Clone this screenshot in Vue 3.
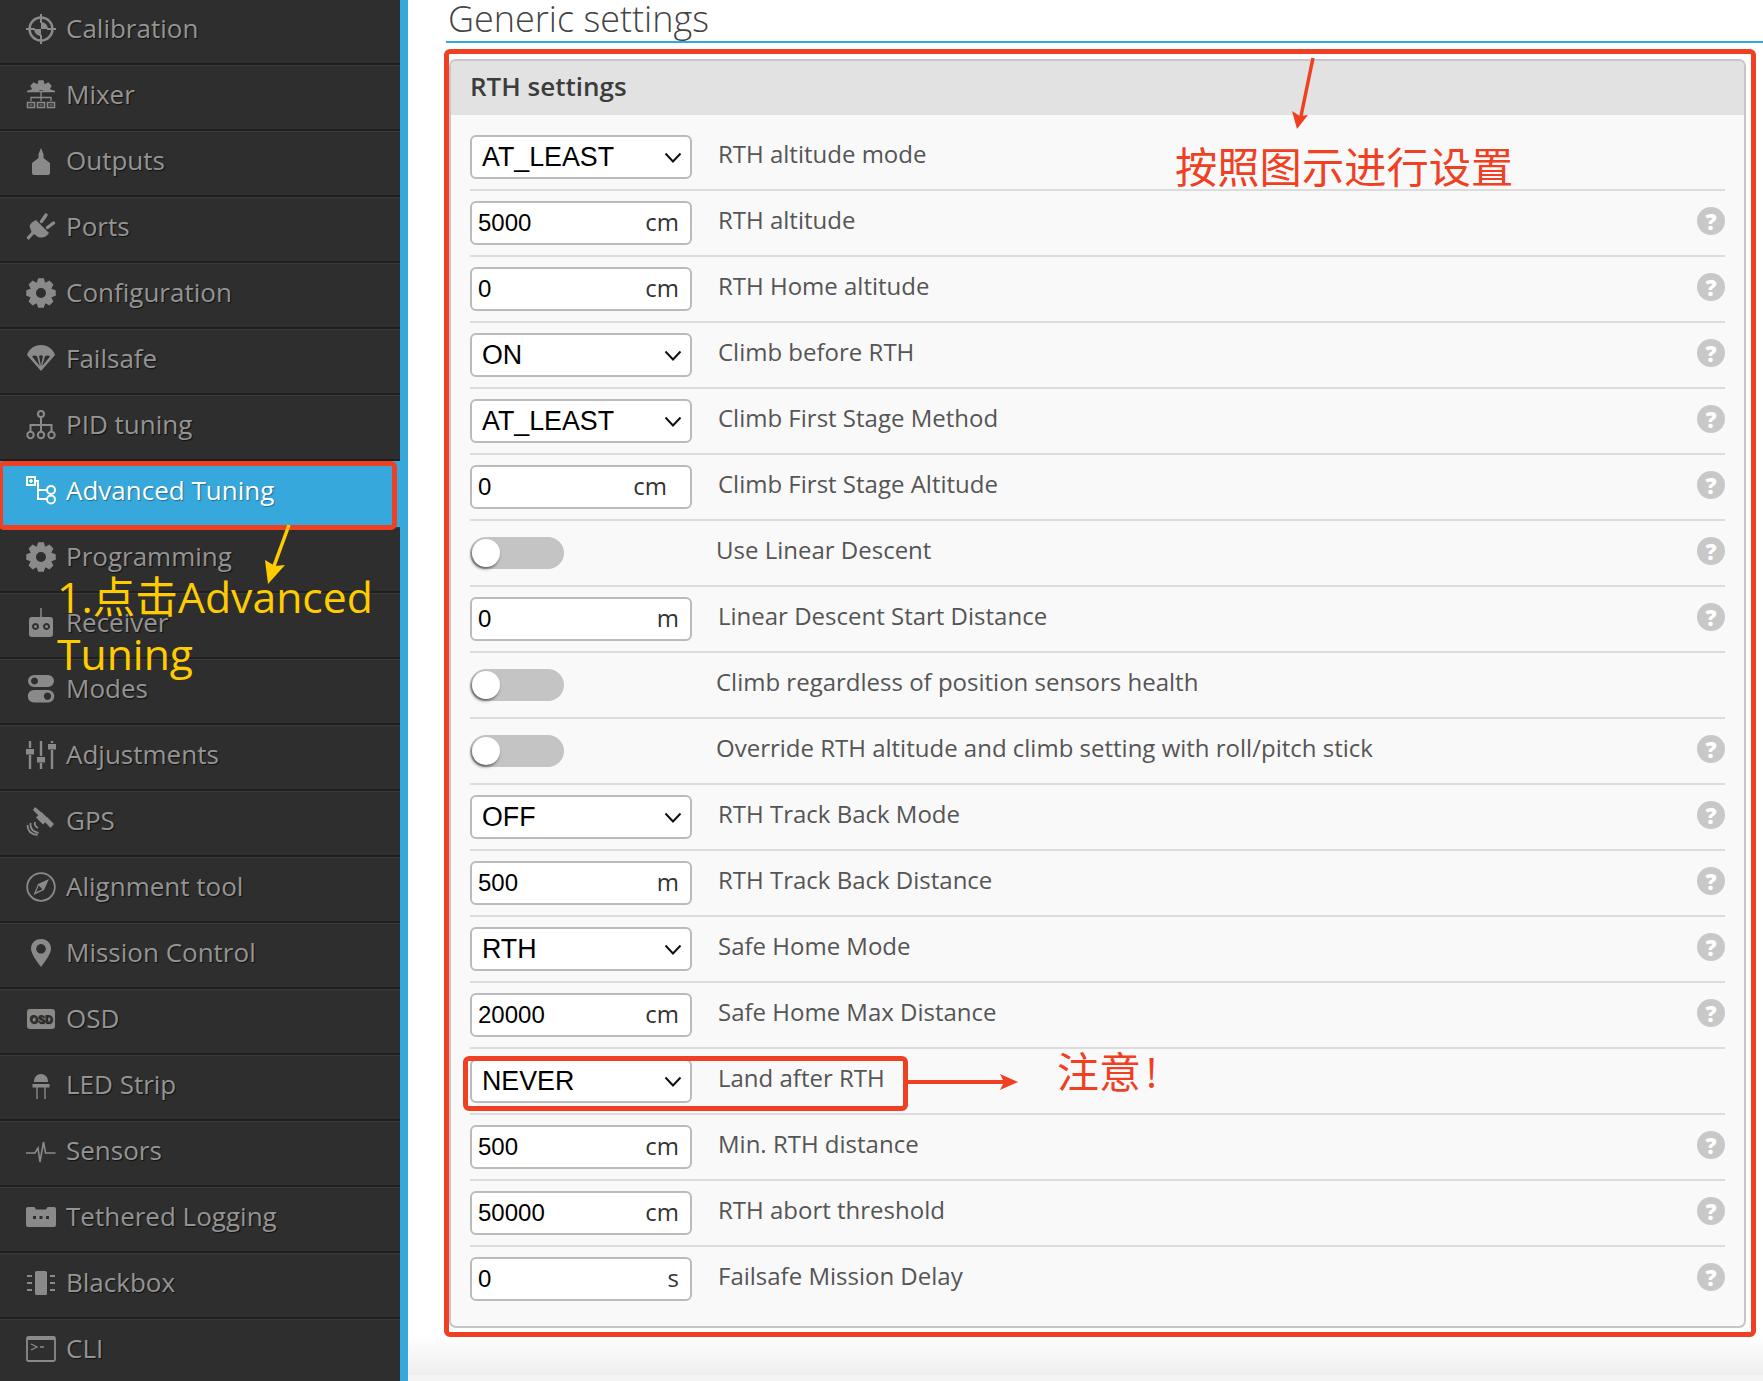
<script setup>
// builds a cog outline with a round hole in the middle
const gear = (cx, cy, R, r, hole, n) => {
  let d = ''
  const step = (Math.PI * 2) / n
  for (let i = 0; i < n; i++) {
    const a = i * step - Math.PI / 2
    const pts = [
      [r, a - step * 0.5],
      [R, a - step * 0.24],
      [R, a + step * 0.24],
      [r, a + step * 0.5]
    ]
    pts.forEach(([rad, t], j) => {
      const x = (cx + rad * Math.cos(t)).toFixed(2)
      const y = (cy + rad * Math.sin(t)).toFixed(2)
      d += (i === 0 && j === 0 ? 'M' : 'L') + x + ' ' + y + ' '
    })
  }
  d += `Z M${cx - hole} ${cy} a${hole} ${hole} 0 1 0 ${hole * 2} 0 a${hole} ${hole} 0 1 0 ${-hole * 2} 0 Z`
  return d
}

const cog = `<path fill="currentColor" fill-rule="evenodd" d="${gear(15, 15, 15, 11.2, 5, 8)}"/>`

const icons = {
  calibration: `<g fill="none" stroke="currentColor" stroke-width="2.4"><circle cx="15" cy="15" r="11.5"/><path stroke-width="2" d="M15 0v9M15 21v9M0 15h9M21 15h9"/></g><path fill="currentColor" d="M15 8a7 7 0 0 1 7 7h-7zM15 22a7 7 0 0 1-7-7h7z"/>`,
  mixer: `<clipPath id="mixclip"><rect x="0" y="0" width="30" height="11"/></clipPath><path clip-path="url(#mixclip)" fill="currentColor" fill-rule="evenodd" d="${gear(15, 13, 13, 9.6, 3, 8)}"/><path fill="none" stroke="currentColor" stroke-width="1.3" d="M15 11v6M5 21v-3.5h20V21M15 17.5V21M1 11.5h28"/><path fill="none" stroke="currentColor" stroke-width="1.5" d="M1.5 22.5h7v5h-7zM11.5 22.5h7v5h-7zM21.5 22.5h7v5h-7z"/><path fill="currentColor" d="M3.5 24.5h3v1h-3zM13.5 24.5h3v1h-3zM23.5 24.5h3v1h-3z"/>`,
  outputs: `<path fill="currentColor" d="M15 2l2.500 6v4L24 17v10q0 2-2 2H8q-2 0-2-2V17l6.500-5V8z"/>`,
  ports: `<path fill="currentColor" d="M10 8L23 21Q19 27 12 25L8 22 2.500 28 0.500 25.500 5.500 20 3.500 14Q5 10 10 8z"/><path fill="none" stroke="currentColor" stroke-width="3.400" stroke-linecap="round" d="M15.500 9.500L20 3M21.500 15.500L27.500 11"/>`,
  cog,
  failsafe: `<path fill="currentColor" fill-rule="evenodd" d="M15 1C7 1 2 7 1 11L15 27 29 11C28 7 23 1 15 1zM6 12.500q2.500-2 5-.2L13.800 22zM19 12.300q2.500-1.800 5 .2L16.200 22zM13 11.700q2-1 4 0L15 22z"/>`,
  pid: `<g fill="none" stroke="currentColor" stroke-width="2"><circle cx="15" cy="4" r="3"/><circle cx="4.500" cy="25" r="3.200"/><circle cx="15" cy="25" r="3.200"/><circle cx="25.500" cy="25" r="3.200"/><path d="M15 7v14.800M4.500 21.800V15h21v6.800"/></g>`,
  advanced: `<g fill="none" stroke="currentColor" stroke-width="2"><rect x="1" y="1" width="8" height="8"/><path d="M9 5h3v18h10M12 14h10M3.300 5h3.400M5 3.300v3.400"/><circle cx="25" cy="14" r="4"/><circle cx="25" cy="23.500" r="4"/></g>`,
  receiver: `<path fill="none" stroke="currentColor" stroke-width="1.500" d="M15 0v9"/><path fill="currentColor" fill-rule="evenodd" d="M6 9h18q3 0 3 3v14q0 3-3 3H6q-3 0-3-3V12q0-3 3-3zM9.500 15a3.500 3.500 0 1 0 .01 0zM20.500 15a3.500 3.500 0 1 0 .01 0z"/><circle cx="9.500" cy="18.500" r="1.500" fill="currentColor"/><circle cx="20.500" cy="18.500" r="1.500" fill="currentColor"/>`,
  modes: `<path fill="currentColor" fill-rule="evenodd" d="M8 1h14a6 6 0 0 1 0 12H8A6 6 0 0 1 8 1zM8.500 3.500a3.500 3.500 0 1 0 .01 0zM8 16h14a6 6 0 0 1 0 12.500H8A6 6 0 0 1 8 16zM21.500 18.500a3.700 3.700 0 1 0 .01 0z"/>`,
  adjust: `<g fill="none" stroke="currentColor" stroke-width="2.400"><path d="M4 1v7M4 15v14M15 1v15M15 23v6M26 1v2M26 10v19"/></g><path fill="currentColor" d="M0 9h8v5.500H0zM11 17h8v5.500h-8zM22 4h8v5.500h-8z"/>`,
  gps: `<g fill="currentColor"><path d="M9 1l7 6-3 3-6-6zM21 11l7 7-3.500 4-7-7.500z"/><path d="M15.500 6l7 7-5.500 5.500-7-7z"/></g><path fill="none" stroke="currentColor" stroke-width="1.800" d="M9 16q-1 4 3 6M4.500 17q-1 8 8 10M1.500 19q0 9 10 10"/>`,
  align: `<circle cx="15" cy="15" r="13.800" fill="none" stroke="currentColor" stroke-width="1.800"/><path fill="currentColor" d="M23 7L18 18 7.500 23 12 12z"/><path fill="#2e2e2e" d="M12.800 13.500L16.500 17.300 10 20z"/>`,
  pin: `<path fill="currentColor" fill-rule="evenodd" d="M15 1C8.500 1 5 6 5 10.500c0 5 5 12 10 18.500 5-6.500 10-13.500 10-18.500C25 6 21.500 1 15 1zM15 6a4.800 4.800 0 1 1 -.01 0z"/>`,
  osd: `<rect x="1" y="5" width="28" height="20" rx="3" fill="currentColor"/><text x="15" y="19" text-anchor="middle" font-family="Liberation Sans" font-size="10.500" font-weight="700" fill="#2e2e2e">OSD</text>`,
  led: `<path fill="currentColor" d="M8 12V11a7 7 0 0 1 14 0v1zM6.500 14h17v3.500h-17z"/><path fill="none" stroke="currentColor" stroke-width="1.400" d="M11 17v12M19 17v12"/>`,
  sensors: `<path fill="none" stroke="currentColor" stroke-width="1.600" d="M0 17h9l3-5 2 14 3.500-20 2 11h10"/>`,
  tether: `<path fill="currentColor" fill-rule="evenodd" d="M2 5h6.500l1.500 2.500h10L21.500 5H28q2 0 2 2v16q0 2-2 2H2q-2 0-2-2V7q0-2 2-2zM7 14h3v3H7zM13.500 14h3v3h-3zM20 14h3v3h-3z"/>`,
  blackbox: `<rect x="9" y="3" width="12" height="24" rx="1.500" fill="currentColor"/><path fill="none" stroke="currentColor" stroke-width="2.200" d="M1 8h5M1 15h5M1 22h5M24 8h5M24 15h5M24 22h5"/>`,
  cli: `<rect x="1" y="3" width="28" height="24" rx="1.500" fill="none" stroke="currentColor" stroke-width="1.800"/><path fill="currentColor" d="M1 3h28v3H1z"/><path fill="none" stroke="currentColor" stroke-width="1.300" d="M5 10l6 3-6 3M14 13h4"/>`
}

const menu = [
  { name: 'Calibration', icon: 'calibration' },
  { name: 'Mixer', icon: 'mixer' },
  { name: 'Outputs', icon: 'outputs' },
  { name: 'Ports', icon: 'ports' },
  { name: 'Configuration', icon: 'cog' },
  { name: 'Failsafe', icon: 'failsafe' },
  { name: 'PID tuning', icon: 'pid' },
  { name: 'Advanced Tuning', icon: 'advanced', active: true },
  { name: 'Programming', icon: 'cog' },
  { name: 'Receiver', icon: 'receiver' },
  { name: 'Modes', icon: 'modes' },
  { name: 'Adjustments', icon: 'adjust' },
  { name: 'GPS', icon: 'gps' },
  { name: 'Alignment tool', icon: 'align' },
  { name: 'Mission Control', icon: 'pin' },
  { name: 'OSD', icon: 'osd' },
  { name: 'LED Strip', icon: 'led' },
  { name: 'Sensors', icon: 'sensors' },
  { name: 'Tethered Logging', icon: 'tether' },
  { name: 'Blackbox', icon: 'blackbox' },
  { name: 'CLI', icon: 'cli' }
]

const rows = [
  { type: 'select', value: 'AT_LEAST', label: 'RTH altitude mode' },
  { type: 'input', value: '5000', unit: 'cm', label: 'RTH altitude', help: true },
  { type: 'input', value: '0', unit: 'cm', label: 'RTH Home altitude', help: true },
  { type: 'select', value: 'ON', label: 'Climb before RTH', help: true },
  { type: 'select', value: 'AT_LEAST', label: 'Climb First Stage Method', help: true },
  { type: 'input', value: '0', unit: 'cm', wide: true, label: 'Climb First Stage Altitude', help: true },
  { type: 'toggle', label: 'Use Linear Descent', help: true },
  { type: 'input', value: '0', unit: 'm', label: 'Linear Descent Start Distance', help: true },
  { type: 'toggle', label: 'Climb regardless of position sensors health' },
  { type: 'toggle', label: 'Override RTH altitude and climb setting with roll/pitch stick', help: true },
  { type: 'select', value: 'OFF', label: 'RTH Track Back Mode', help: true },
  { type: 'input', value: '500', unit: 'm', label: 'RTH Track Back Distance', help: true },
  { type: 'select', value: 'RTH', label: 'Safe Home Mode', help: true },
  { type: 'input', value: '20000', unit: 'cm', label: 'Safe Home Max Distance', help: true },
  { type: 'select', value: 'NEVER', label: 'Land after RTH' },
  { type: 'input', value: '500', unit: 'cm', label: 'Min. RTH distance', help: true },
  { type: 'input', value: '50000', unit: 'cm', label: 'RTH abort threshold', help: true },
  { type: 'input', value: '0', unit: 's', label: 'Failsafe Mission Delay', help: true }
]
</script>

<template>
  <div class="page">
    <nav class="sidebar">
      <ul class="menu">
        <li v-for="item in menu" :key="item.name" class="menu-item" :class="{ active: item.active }">
          <svg class="menu-icon" viewBox="0 0 30 30" v-html="icons[item.icon]"></svg>
          <span class="menu-text">{{ item.name }}</span>
        </li>
      </ul>
    </nav>

    <main class="main">
      <h2 class="title">Generic settings</h2>

      <section class="panel">
        <h3 class="panel-head">RTH settings</h3>
        <div class="panel-body">
          <div v-for="row in rows" :key="row.label" class="row" :class="{ 'is-toggle': row.type === 'toggle' }">
            <div v-if="row.type === 'select'" class="control select">
              <span>{{ row.value }}</span>
              <svg class="chevron" viewBox="0 0 18 11"><path d="M1.500 1.500L9 9.500l7.500-8" fill="none" stroke="#111" stroke-width="2"/></svg>
            </div>
            <div v-else-if="row.type === 'input'" class="control field" :class="{ wide: row.wide }">
              <span class="value">{{ row.value }}</span>
              <span class="unit">{{ row.unit }}</span>
            </div>
            <div v-else class="toggle"><i class="knob"></i></div>
            <span class="label">{{ row.label }}</span>
            <span v-if="row.help" class="help">?</span>
          </div>
        </div>
      </section>

      <div class="foot"></div>
    </main>

    <!-- hand-drawn notes on top of the screenshot -->
    <div class="mark mark-panel"></div>
    <div class="mark mark-menu"></div>
    <div class="mark mark-land"></div>

    <svg class="arrows" viewBox="0 0 1763 1381">
      <path d="M289 525L274 566" stroke="#ffcc00" stroke-width="3.500" fill="none"/>
      <path d="M268 584L265 560 275 566 285 565z" fill="#ffcc00"/>
      <path d="M1313 58L1301 116" stroke="#f04023" stroke-width="3.500" fill="none"/>
      <path d="M1297 129L1292 111 1300 116 1308 115z" fill="#f04023"/>
      <path d="M907 1082H1006" stroke="#f04023" stroke-width="4" fill="none"/>
      <path d="M1018 1082L1000 1074 1004 1082 1000 1090z" fill="#f04023"/>
    </svg>

    <div class="note note-yellow">1.点击Advanced<br>Tuning</div>
    <div class="note note-red">按照图示进行设置</div>
    <div class="note note-warn">注意<span class="bang">!</span></div>
  </div>
</template>

<style scoped>
.page {
  position: relative;
  display: flex;
  width: 1763px;
  height: 1381px;
  overflow: hidden;
  background: #fff;
  font-family: "Open Sans", "Noto Sans CJK SC", sans-serif;
}

.sidebar {
  flex: none;
  width: 400px;
  border-right: 8px solid #37a8db;
  background: #2e2e2e;
  overflow: hidden;
}

.menu {
  list-style: none;
  margin: -1px 0 0;
  padding: 0;
}

.menu-item {
  box-sizing: border-box;
  display: flex;
  align-items: center;
  gap: 10px;
  height: 66px;
  padding: 0 0 6px 26px;
  border-top: 1px solid #3a3a3a;
  border-bottom: 2px solid #1f1f1f;
  color: #949494;
  font-size: 26px;
  text-shadow: 1px 1px 1px #111;
}

.menu-text {
  margin-bottom: 2px;
}

.menu-item.active {
  background: #37a8db;
  color: #fff;
  border-color: #37a8db;
  text-shadow: 1px 1px 1px #1d6f96;
}

.menu-icon {
  flex: none;
  width: 30px;
  height: 30px;
  color: #8a8a8a;
}

.active .menu-icon {
  color: #fff;
}

.main {
  flex: 1;
  display: flex;
  flex-direction: column;
  min-width: 0;
  padding-left: 41px;
}

.title {
  box-sizing: border-box;
  height: 43px;
  margin: 0 0 0 -3px;
  padding-left: 2px;
  border-bottom: 2px solid #37a8db;
  color: #444;
  font-size: 36px;
  font-weight: 300;
  line-height: 38px;
  white-space: nowrap;
}

.panel {
  box-sizing: border-box;
  margin: 16px 17px 0 0;
  border: 2px solid #c6c6c6;
  border-radius: 7px;
  background: #f9f9f9;
  overflow: hidden;
}

.panel-head {
  height: 54px;
  margin: 0;
  padding-left: 19px;
  background: #e2e2e2;
  color: #3c3c3c;
  font-size: 26px;
  font-weight: 600;
  line-height: 50px;
}

.panel-body {
  padding: 10px 19px 15px;
}

.row {
  box-sizing: border-box;
  display: flex;
  align-items: center;
  height: 66px;
  border-bottom: 2px solid #dcdcdc;
}

.row:last-child {
  height: 64px;
  border-bottom: 0;
}

.control {
  box-sizing: border-box;
  flex: none;
  display: flex;
  align-items: center;
  justify-content: space-between;
  width: 222px;
  height: 44px;
  border: 2px solid #bbb;
  border-radius: 6px;
  background: #fff;
  color: #000;
  font-family: "Liberation Sans", Arial, sans-serif;
}

.select {
  padding: 0 8px 0 10px;
  font-size: 26.800px;
}

.chevron {
  width: 18px;
  height: 11px;
}

.field {
  padding: 0 11px 0 6px;
  font-size: 24px;
}

.field.wide {
  padding-right: 23px;
}

.unit {
  margin-bottom: 3px;
  color: #333;
  font-family: "Open Sans", sans-serif;
  font-weight: 500;
}

.toggle {
  position: relative;
  flex: none;
  width: 94px;
  height: 32px;
  border-radius: 16px;
  background: #c4c4c4;
}

.knob {
  position: absolute;
  left: 2px;
  top: 2px;
  width: 28px;
  height: 28px;
  border-radius: 50%;
  background: #fff;
  box-shadow: -1px 2px 3px rgba(0, 0, 0, 0.5);
}

.label {
  flex: 1;
  margin: 0 0 8px 26px;
  color: #555;
  font-size: 24px;
  white-space: nowrap;
}

.is-toggle .label {
  margin-left: 152px;
}

.help {
  flex: none;
  width: 28px;
  height: 28px;
  margin-bottom: 4px;
  border-radius: 50%;
  background: #c8c8c8;
  color: #fff;
  font-size: 22px;
  font-weight: 800;
  line-height: 28px;
  text-align: center;
}

.foot {
  flex: none;
  margin: auto 0 0 -41px;
  height: 41px;
  border-bottom: 6px solid #f4f4f4;
  background: linear-gradient(#fff, #eee);
}

.mark {
  position: absolute;
  box-sizing: border-box;
  border: 5px solid #f04023;
  border-radius: 6px;
}

.mark-panel {
  left: 444px;
  top: 49px;
  width: 1312px;
  height: 1288px;
}

.mark-menu {
  left: -2px;
  top: 461px;
  width: 399px;
  height: 69px;
}

.mark-land {
  left: 463px;
  top: 1056px;
  width: 445px;
  height: 55px;
}

.arrows {
  position: absolute;
  left: 0;
  top: 0;
  width: 1763px;
  height: 1381px;
  pointer-events: none;
}

.note {
  position: absolute;
  white-space: nowrap;
}

.note-yellow {
  left: 57px;
  top: 568px;
  color: #ffcc00;
  font-size: 42.700px;
  line-height: 57px;
}

.note-red {
  left: 1175px;
  top: 137px;
  color: #f04023;
  font-size: 42.300px;
  line-height: 60px;
}

.note-warn {
  left: 1057px;
  top: 1042px;
  color: #f04023;
  font-size: 42px;
  line-height: 60px;
}

.bang {
  margin-left: 5px;
}
</style>

<style>
body {
  margin: 0;
}
</style>
